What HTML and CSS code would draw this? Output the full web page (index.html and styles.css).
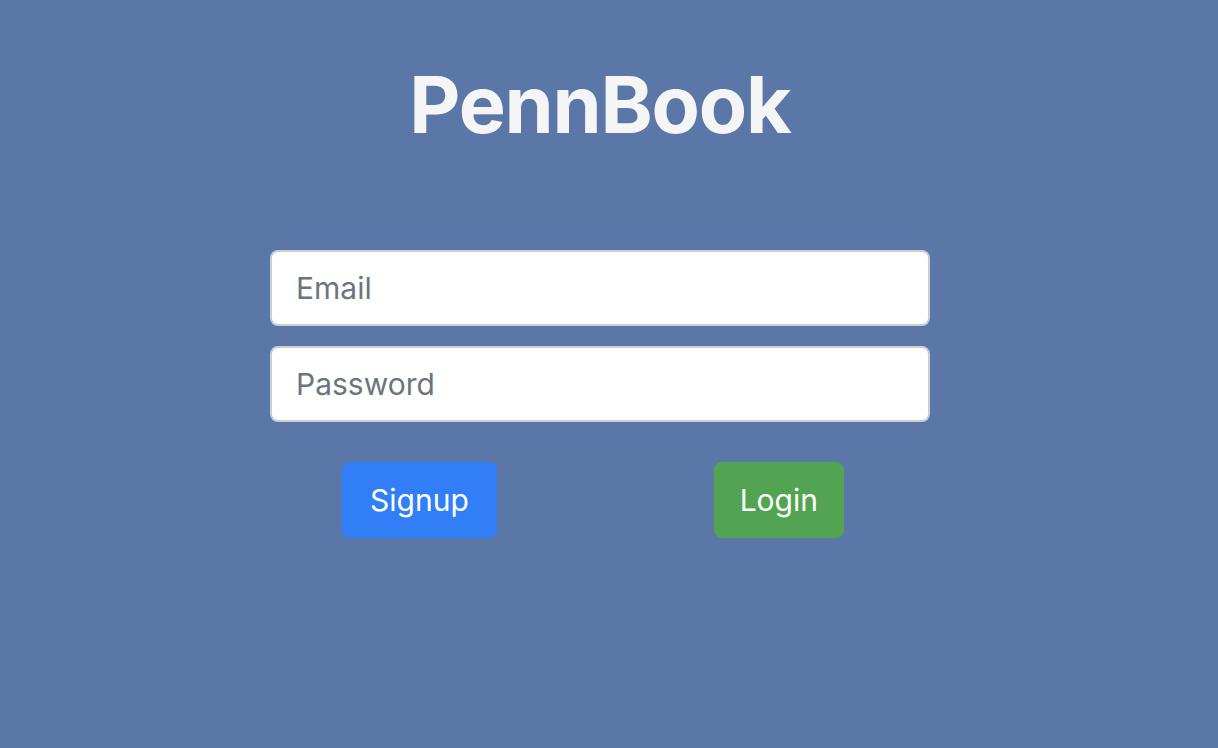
FILE: index.html
```
<!DOCTYPE html>
<html lang="en">
<head>
<meta charset="utf-8">
<title>PennBook</title>
<link rel="stylesheet" href="styles.css">
</head>
<body>
<main class="page">
  <h1 class="title">PennBook</h1>
  <form class="login-form">
    <input class="field" type="email" placeholder="Email">
    <input class="field" type="password" placeholder="Password">
    <div class="actions">
      <button type="button" class="btn btn-primary">Signup</button>
      <button type="button" class="btn btn-success">Login</button>
    </div>
  </form>
</main>
</body>
</html>
```
FILE: styles.css
```
* { box-sizing: border-box; }
html, body {
  margin: 0;
  height: 100%;
}
body {
  background: #5b77a8;
  font-family: Inter, "Noto Sans", sans-serif;
}
.page {
  display: flex;
  flex-direction: column;
  align-items: center;
  padding: 56px 18px 0 0;
}
.title {
  margin: 0;
  font-size: 79px;
  font-weight: 700;
  line-height: 96px;
  color: #f5f5f5;
  letter-spacing: -1.2px;
}
.login-form {
  width: 660px;
  margin-top: 98px;
  display: flex;
  flex-direction: column;
  gap: 20px;
}
.field {
  display: block;
  width: 100%;
  height: 76px;
  padding: 0 24px;
  border: 2px solid #c9ced6;
  border-radius: 8px;
  background: #fff;
  font-family: Inter, "Noto Sans", sans-serif;
  font-size: 30px;
  color: #495057;
  outline: none;
}
.field::placeholder { color: #6c757d; }
.actions {
  display: flex;
  justify-content: space-between;
  padding: 20px 86px 0 72px;
}
.btn {
  height: 76px;
  padding: 0 26px;
  border: none;
  border-radius: 8px;
  font-family: Inter, "Noto Sans", sans-serif;
  font-size: 30px;
  color: #fff;
  cursor: pointer;
}
.btn-primary { background: #317ef6; padding: 0 28px; }
.btn-success { background: #52a452; }
```
